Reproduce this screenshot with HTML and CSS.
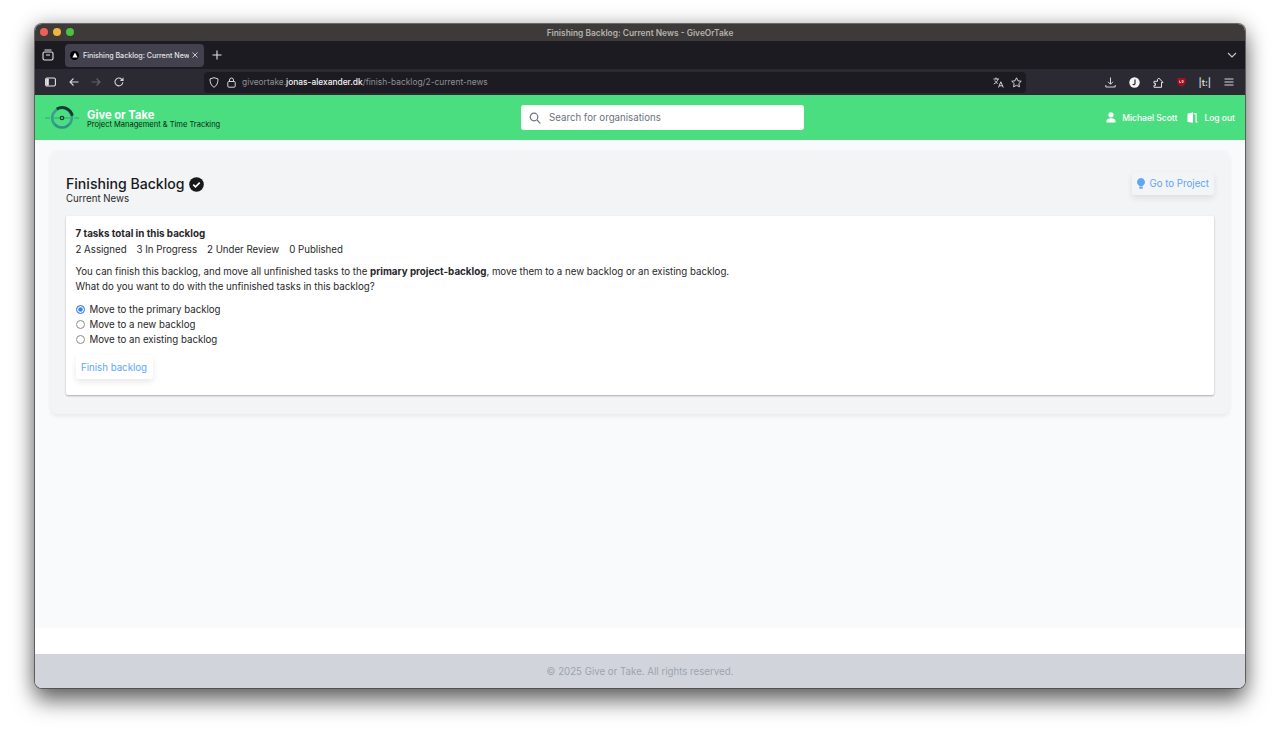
FILE: index.html
```html
<!DOCTYPE html>
<html lang="en">
<head>
  <meta charset="UTF-8">
  <title>Finishing Backlog: Current News - GiveOrTake</title>
  <link rel="stylesheet" href="styles.css">
</head>
<body>

<div class="window">

  <div class="titlebar">
    <div class="lights">
      <span class="light red"></span>
      <span class="light yellow"></span>
      <span class="light green"></span>
    </div>
    <div class="window-title">Finishing Backlog: Current News - GiveOrTake</div>
  </div>

  <div class="tabbar">
    <div class="tab-group">
      <svg width="12" height="12" viewBox="0 0 12 12" fill="none" stroke="#e4e4e8" stroke-width="1.1"><rect x="1" y="3" width="10" height="8" rx="1.5"/><path d="M2.5 1h7"/><path d="M4 6h4"/></svg>
    </div>
    <div class="tab">
      <span class="favicon"><svg width="6" height="6" viewBox="0 0 6 6"><path d="M3 .6L5.6 5.4H.4z" fill="#fff"/></svg></span>
      <span class="tab-label">Finishing Backlog: Current News</span>
      <svg class="tab-close" width="6" height="6" viewBox="0 0 6 6" stroke="#d4d4d8" stroke-width=".9"><path d="M.5.5l5 5M5.5.5l-5 5"/></svg>
    </div>
    <svg class="new-tab" width="10" height="10" viewBox="0 0 10 10" stroke="#e4e4e8" stroke-width="1.1"><path d="M5 .5v9M.5 5h9"/></svg>
    <svg class="tab-list" width="10" height="6" viewBox="0 0 10 6" fill="none" stroke="#c8c8cc" stroke-width="1.1"><path d="M1 1l4 4 4-4"/></svg>
  </div>

  <div class="toolbar">
    <div class="nav-buttons">
      <svg width="11" height="10" viewBox="0 0 11 10" fill="none" stroke="#e4e4e8" stroke-width="1.1"><rect x=".6" y="1" width="9.8" height="8" rx="1.5"/><rect x="1.2" y="1.6" width="2.6" height="6.8" fill="#e4e4e8" stroke="none"/></svg>
      <svg width="10" height="10" viewBox="0 0 10 10" fill="none" stroke="#d4d4d8" stroke-width="1.1"><path d="M9.5 5H1M4.5 1.5L1 5l3.5 3.5"/></svg>
      <svg width="10" height="10" viewBox="0 0 10 10" fill="none" stroke="#63636a" stroke-width="1.1"><path d="M.5 5H9M5.5 1.5L9 5 5.5 8.5"/></svg>
      <svg width="10" height="10" viewBox="0 0 10 10" fill="none" stroke="#d4d4d8" stroke-width="1.1"><path d="M8.8 5.2A3.9 3.9 0 1 1 7.6 2.1L9 3.3M9 .8v2.6H6.4"/></svg>
    </div>
    <div class="urlbar">
      <svg width="10" height="11" viewBox="0 0 10 11" fill="none" stroke="#d4d4d8" stroke-width="1"><path d="M5 .7l4 1.2c0 4-1.2 6.8-4 8.400C2.200 8.700 1 5.900 1 1.900z"/></svg>
      <svg class="lock" width="9" height="11" viewBox="0 0 9 11" fill="none" stroke="#d4d4d8" stroke-width="1"><rect x=".8" y="4.500" width="7.400" height="5.700" rx="1"/><path d="M2.500 4.500V3a2 2 0 0 1 4 0v1.500"/></svg>
      <div class="url">giveortake.<b>jonas-alexander.dk</b>/finish-backlog/2-current-news</div>
      <svg class="translate" width="11" height="11" viewBox="0 0 11 11" fill="none" stroke="#e4e4e8" stroke-width=".9"><path d="M.5 2h5.500M3 .5V2M5 2C4.500 4.200 3 6 .8 7M1.800 3.500c.6 1.300 1.500 2.300 3 3M5.500 10.500L7.800 4.800l2.500 5.700M6.300 8.800h3.200"/></svg>
      <svg class="star" width="11" height="11" viewBox="0 0 11 11" fill="none" stroke="#e4e4e8" stroke-width=".9"><path d="M5.500.8l1.450 3 3.300.45-2.400 2.300.6 3.300-2.950-1.600-2.950 1.600.6-3.300L.75 4.250l3.300-.45z"/></svg>
    </div>
    <div class="extensions">
      <svg width="11" height="11" viewBox="0 0 11 11" fill="none" stroke="#d4d4d8" stroke-width="1"><path d="M5.500.5v6.500M3 4.800L5.500 7.300 8 4.800M.8 8v2h9.400V8"/></svg>
      <svg width="11" height="11" viewBox="0 0 11 11"><circle cx="5.500" cy="5.500" r="5.200" fill="#f4f4f5"/><path d="M6 2.500v4a1.200 1.200 0 0 1-2.200.6" fill="none" stroke="#23232a" stroke-width="1.200"/></svg>
      <svg width="11" height="11" viewBox="0 0 11 11" fill="none" stroke="#e4e4e8" stroke-width="1"><path d="M1 10.300h7.500V5.500h1.500L5.800 1 4.500 2.300v2H1v2h1.500v2H1z"/></svg>
      <svg class="ublock" width="9" height="10" viewBox="0 0 9 10"><path d="M.3 1h8.400v4c0 2.500-2 4-4.200 4.800C2.300 9 .3 7.500.3 5z" fill="#9c1220"/><path d="M2.500 3.500v2h1.500M5 3.500v2h1.200V3.500z" fill="none" stroke="#fff" stroke-width=".6"/></svg>
      <span class="tco">|t:|</span>
      <svg width="10" height="8" viewBox="0 0 10 8" stroke="#d4d4d8" stroke-width="1"><path d="M.5 1h9M.5 4h9M.5 7h9"/></svg>
    </div>
  </div>

  <header class="app-header">
    <div class="brand">
      <svg class="logo" width="36" height="28" viewBox="0 0 36 28" fill="none">
        <path d="M1 14h5M30 14h5" stroke="#35a582" stroke-width="1"/>
        <circle cx="18" cy="14" r="9.800" stroke="#3a9f8a" stroke-width="2.600"/>
        <path d="M11 20a9 9 0 0 0 14 0" stroke="#2f8f80" stroke-width="1.500"/>
        <path d="M12.700 5A10.500 10.500 0 0 1 28.300 11.700" stroke="#123c33" stroke-width="2.800"/>
        <path d="M10 14h16" stroke="#2f8f80" stroke-width=".8"/>
        <circle cx="18" cy="14" r="1.700" fill="#4ade80" stroke="#123c33" stroke-width="1.300"/>
      </svg>
      <div class="brand-text">
        <div class="brand-name">Give or Take</div>
        <div class="brand-sub">Project Management &amp; Time Tracking</div>
      </div>
    </div>
    <div class="search">
      <svg width="12" height="12" viewBox="0 0 12 12" fill="none" stroke="#6b7280" stroke-width="1.200"><circle cx="5" cy="5" r="3.800"/><path d="M8 8l3.300 3.300"/></svg>
      <span>Search for organisations</span>
    </div>
    <div class="user-nav">
      <a class="user-link">
        <svg width="10" height="11" viewBox="0 0 10 11" fill="#fff"><circle cx="5" cy="2.800" r="2.600"/><path d="M.5 10.500V9c0-1.800 1.500-2.800 4.500-2.800S9.500 7.200 9.500 9v1.500z"/></svg>
        Michael Scott
      </a>
      <a class="user-link">
        <svg width="11" height="11" viewBox="0 0 11 11" fill="#fff"><path d="M.5 10V1.800L6 .2v10.600z"/><path d="M6.800 1.200h2.900v8.300h1v1H8.500V2.400H6.800z"/></svg>
        Log out
      </a>
    </div>
  </header>

  <main class="content">
    <div class="panel">
      <div class="panel-head">
        <div>
          <h1>Finishing Backlog
            <svg width="15" height="15" viewBox="0 0 15 15"><circle cx="7.500" cy="7.500" r="7.300" fill="#18181b"/><path d="M4.200 7.700l2.300 2.200 4.200-4.200" fill="none" stroke="#fff" stroke-width="1.700"/></svg>
          </h1>
          <div class="subtitle">Current News</div>
        </div>
        <a class="btn btn-project">
          <svg width="8" height="11" viewBox="0 0 8 11" fill="#60a5fa"><path d="M4 0a4 4 0 0 1 2.300 7.200L6 8H2l-.3-.8A4 4 0 0 1 4 0z"/><rect x="2.200" y="8.600" width="3.600" height="2.200" rx=".8"/></svg>
          Go to Project
        </a>
      </div>

      <div class="card">
        <div class="total">7 tasks total in this backlog</div>
        <div class="counts">
          <span>2 Assigned</span>
          <span>3 In Progress</span>
          <span>2 Under Review</span>
          <span>0 Published</span>
        </div>
        <p>You can finish this backlog, and move all unfinished tasks to the <b>primary project-backlog</b>, move them to a new backlog or an existing backlog.<br>What do you want to do with the unfinished tasks in this backlog?</p>
        <div class="options">
          <label class="option"><span class="radio checked"></span>Move to the primary backlog</label>
          <label class="option"><span class="radio"></span>Move to a new backlog</label>
          <label class="option"><span class="radio"></span>Move to an existing backlog</label>
        </div>
        <a class="btn btn-finish">Finish backlog</a>
      </div>
    </div>
  </main>

  <div class="spacer"></div>

  <footer class="footer">© 2025 Give or Take. All rights reserved.</footer>
</div>

</body>
</html>
```

FILE: styles.css
```css
* {
  box-sizing: border-box;
}

html, body {
  height: 100%;
}

body {
  margin: 0;
  padding: 24px 35px 47px;
  background-color: #fff;
  font-family: Inter, "Liberation Sans", sans-serif;
  overflow: hidden;
}

.window {
  display: flex;
  flex-direction: column;
  height: 664px;
  border-radius: 7px;
  overflow: hidden;
  background-color: #fff;
  box-shadow: 0 0 0 1px rgba(70,70,70,0.75), 0 13px 22px rgba(0,0,0,0.55), 0 0 20px rgba(0,0,0,0.25);
}

/* browser chrome */
.titlebar {
  position: relative;
  display: flex;
  align-items: center;
  justify-content: center;
  height: 17px;
  background-color: #3d3a39;
  flex-shrink: 0;
}

.lights {
  position: absolute;
  left: 5px;
  top: 4px;
  display: flex;
  gap: 5px;
}

.light {
  width: 8px;
  height: 8px;
  border-radius: 50%;
}

.light.red { background-color: #ed5f57; }
.light.yellow { background-color: #f0b53a; }
.light.green { background-color: #4bc042; }

.window-title {
  font-size: 8.400px;
  font-weight: 600;
  color: #b4b2b0;
}

.tabbar {
  display: flex;
  align-items: center;
  height: 28px;
  background-color: #1c1b22;
  flex-shrink: 0;
}

.tab-group {
  display: flex;
  align-items: center;
  justify-content: center;
  width: 25px;
  height: 28px;
  flex-shrink: 0;
}

.tab {
  display: flex;
  align-items: center;
  width: 139px;
  height: 23px;
  margin-left: 5px;
  padding: 0 6px 0 5px;
  border-radius: 4px;
  background-color: #42414d;
  color: #e4e4e8;
  font-size: 7.100px;
  font-weight: 500;
}

.favicon {
  display: flex;
  align-items: center;
  justify-content: center;
  width: 9px;
  height: 9px;
  border-radius: 50%;
  background-color: #000;
  flex-shrink: 0;
}

.tab-label {
  flex: 1;
  margin-left: 4px;
  overflow: hidden;
  white-space: nowrap;
}

.tab-close {
  margin-left: 3px;
  flex-shrink: 0;
}

.new-tab {
  margin-left: 8px;
}

.tab-list {
  margin-left: auto;
  margin-right: 8px;
}

.toolbar {
  display: flex;
  align-items: center;
  height: 26px;
  background-color: #2b2a33;
  flex-shrink: 0;
}

.nav-buttons {
  display: flex;
  align-items: center;
  gap: 12.500px;
  width: 169px;
  padding-left: 10px;
  flex-shrink: 0;
}

.urlbar {
  display: flex;
  align-items: center;
  width: 822px;
  height: 21px;
  padding: 0 4px 0 5px;
  border-radius: 4px;
  background-color: #1c1b22;
  flex-shrink: 0;
}

.lock {
  margin-left: 8px;
}

.url {
  flex: 1;
  margin-left: 6px;
  font-size: 8.400px;
  color: #8f8f96;
  white-space: nowrap;
}

.url b {
  font-weight: 500;
  color: #f4f4f5;
}

.star {
  margin-left: 7px;
}

.extensions {
  display: flex;
  align-items: center;
  flex: 1;
  justify-content: space-between;
  padding: 0 11px 0 79px;
}

.tco {
  font-size: 9px;
  font-weight: 600;
  color: #d4d4d8;
}

/* app header */
.app-header {
  position: relative;
  display: flex;
  align-items: center;
  justify-content: space-between;
  height: 45px;
  padding: 0 10px 0 9px;
  background-color: #4ade80;
  flex-shrink: 0;
}

.brand {
  display: flex;
  align-items: center;
  gap: 7px;
}

.logo {
  flex-shrink: 0;
}

.brand-text {
  padding-top: 4px;
}

.brand-name {
  font-size: 11.200px;
  line-height: 9px;
  font-weight: 700;
  color: #fff;
}

.brand-sub {
  margin-top: 1px;
  font-size: 7.530px;
  line-height: 8px;
  color: #0c1f14;
}

.search {
  position: absolute;
  left: 486px;
  top: 10px;
  display: flex;
  align-items: center;
  gap: 8px;
  width: 283px;
  height: 25px;
  padding-left: 8px;
  border-radius: 3px;
  background-color: #fff;
  color: #6b7280;
  font-size: 9.700px;
}

.user-nav {
  display: flex;
  align-items: center;
  gap: 10px;
}

.user-link {
  display: flex;
  align-items: center;
  gap: 6px;
  color: #fff;
  font-size: 8.500px;
  font-weight: 500;
}

/* page content */
.content {
  flex: 1;
  padding: 11px 16px;
  background-color: #f8fafc;
}

.panel {
  padding: 24px 15px 19px;
  border-radius: 6px;
  background-color: #f3f4f6;
  box-shadow: 0 2px 5px rgba(0,0,0,0.08);
}

.panel-head {
  display: flex;
  align-items: flex-start;
  justify-content: space-between;
}

h1 {
  display: flex;
  align-items: center;
  gap: 4px;
  margin: 0;
  font-size: 14.100px;
  line-height: 18px;
  font-weight: 500;
  color: #18181b;
}

.subtitle {
  font-size: 9.680px;
  line-height: 12px;
  color: #27272a;
}

.btn {
  display: inline-flex;
  align-items: center;
  color: #60a5fa;
  font-size: 9.680px;
  border-radius: 3px;
  box-shadow: 0 3px 6px rgba(0,0,0,0.09);
}

.btn-project {
  gap: 5px;
  height: 23px;
  margin-top: -3px;
  padding: 0 5px;
}

.card {
  margin-top: 11px;
  padding: 11px 10px 16px 9.500px;
  border-radius: 2px;
  background-color: #fff;
  color: #27272a;
  font-size: 9.680px;
  box-shadow: 0 1px 2px rgba(0,0,0,0.3);
}

.total {
  font-size: 9.800px;
  font-weight: 700;
  line-height: 13px;
}

.counts {
  display: flex;
  gap: 10px;
  margin-top: 3px;
  line-height: 13px;
}

.card p {
  margin: 8px 0 0;
  line-height: 15px;
}

.card p b {
  font-size: 9.800px;
  font-weight: 700;
}

.options {
  margin-top: 8px;
}

.option {
  display: flex;
  align-items: center;
  gap: 4.500px;
  height: 15px;
}

.radio {
  width: 9.500px;
  height: 9.500px;
  border: 1px solid #8b8b90;
  border-radius: 50%;
  background-color: #fff;
  flex-shrink: 0;
}

.radio.checked {
  border: 1px solid #3b82f6;
  background-color: #3b82f6;
  box-shadow: inset 0 0 0 1.200px #fff;
}

.btn-finish {
  height: 24px;
  margin-top: 8px;
  padding: 0 5.500px;
  background-color: #fff;
}

.spacer {
  height: 26px;
  background-color: #fff;
  flex-shrink: 0;
}

.footer {
  display: flex;
  align-items: center;
  justify-content: center;
  height: 34px;
  background-color: #d1d5db;
  color: #9ca3af;
  font-size: 9.700px;
  flex-shrink: 0;
}
```
